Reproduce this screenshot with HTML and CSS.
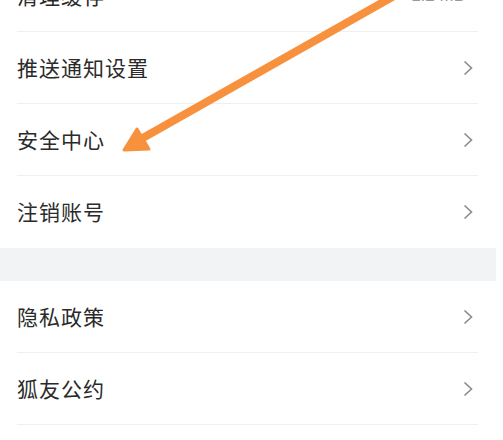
FILE: index.html
```html
<!DOCTYPE html>
<html lang="zh-CN">
<head>
<meta charset="utf-8">
<link rel="stylesheet" href="styles.css">
</head>
<body>
<div class="page">
  <div class="group">
    <div class="row"><div class="inner"><span class="label">清理缓存</span><span class="value">1.2 MB</span></div></div>
    <div class="row"><div class="inner"><span class="label">推送通知设置</span><svg class="chev" viewBox="0 0 10 16"><polyline points="1.5,1.5 8.5,8 1.5,14.5"/></svg></div></div>
    <div class="row"><div class="inner"><span class="label">安全中心</span><svg class="chev" viewBox="0 0 10 16"><polyline points="1.5,1.5 8.5,8 1.5,14.5"/></svg></div></div>
    <div class="row last"><div class="inner"><span class="label">注销账号</span><svg class="chev" viewBox="0 0 10 16"><polyline points="1.5,1.5 8.5,8 1.5,14.5"/></svg></div></div>
  </div>
  <div class="gap"></div>
  <div class="group">
    <div class="row"><div class="inner"><span class="label">隐私政策</span><svg class="chev" viewBox="0 0 10 16"><polyline points="1.5,1.5 8.5,8 1.5,14.5"/></svg></div></div>
    <div class="row"><div class="inner"><span class="label">狐友公约</span><svg class="chev" viewBox="0 0 10 16"><polyline points="1.5,1.5 8.5,8 1.5,14.5"/></svg></div></div>
  </div>
</div>
<svg class="arrow" width="503" height="440" viewBox="0 0 503 440">
  <line x1="394" y1="-4" x2="141" y2="139" stroke="#f7913d" stroke-width="8" stroke-linecap="round"/>
  <polygon points="124,150 137,129 149,149" fill="#f7913d" stroke="#f7913d" stroke-width="3" stroke-linejoin="round"/>
</svg>
</body>
</html>
```
FILE: styles.css
```css
html, body {
  margin: 0;
  padding: 0;
  background: #ffffff;
  overflow: hidden;
}
body {
  width: 503px;
  height: 440px;
  position: relative;
  font-family: "Noto Sans CJK SC", "Noto Sans", sans-serif;
}
.page {
  width: 496px;
  margin-top: -40px;
  background: #ffffff;
}
.row {
  height: 72px;
  padding: 0 18px 0 17px;
  box-sizing: border-box;
}
.inner {
  height: 100%;
  box-sizing: border-box;
  border-bottom: 1px solid #efefef;
  display: flex;
  align-items: center;
  justify-content: space-between;
  padding-right: 5px;
}
.row.last .inner {
  border-bottom-color: transparent;
}
.label {
  font-size: 21px;
  letter-spacing: 1px;
  color: #2a2a2a;
  line-height: 1;
}
.value {
  font-size: 17px;
  color: #999999;
  margin-right: 8px;
  font-family: "Liberation Sans", "Noto Sans", sans-serif;
}
.chev {
  width: 10px;
  height: 16px;
  fill: none;
  stroke: #8a8a8a;
  stroke-width: 1.6;
}
.gap {
  height: 33px;
  background: #f2f3f5;
}
.arrow {
  position: absolute;
  left: 0;
  top: 0;
  pointer-events: none;
}
```
